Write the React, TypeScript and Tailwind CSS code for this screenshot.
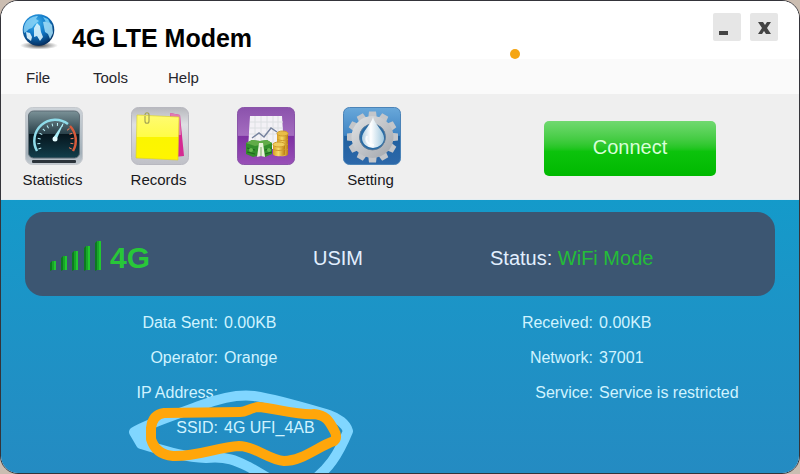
import React from "react";

function GlobeIcon() {
  return (
    <svg width="40" height="36" viewBox="0 0 40 36" aria-hidden="true">
      <defs>
        <radialGradient id="globe" cx="42%" cy="28%" r="75%">
          <stop offset="0" stopColor="#3fb2ee" />
          <stop offset="0.5" stopColor="#0f76c6" />
          <stop offset="1" stopColor="#052a58" />
        </radialGradient>
        <radialGradient id="globeShade">
          <stop offset="0" stopColor="#222" stopOpacity="0.85" />
          <stop offset="1" stopColor="#333" stopOpacity="0" />
        </radialGradient>
      </defs>
      <ellipse cx="20" cy="31.500" rx="19" ry="4" fill="url(#globeShade)" />
      <circle cx="19.500" cy="16" r="15.800" fill="url(#globe)" />
      <path d="M7 8c3-4 8-6 12-6l-2 3 3 2-4 3-3 4-3 1-3 3-2 1c-1-4 0-8 2-11z" fill="#8fd6f7" opacity="0.8" />
      <path d="M15 14l3-5 3 3 1 6 2 5-3 4-3-5-3 1z" fill="#d9f3fd" opacity="0.9" />
      <path d="M24 8l5-1 4 4 1 8-3 6-2-5-3-2z" fill="#a6e0f9" opacity="0.85" />
      <path d="M7 18l4 1 2 4-1 4-4-3z" fill="#e6f8ff" opacity="0.9" />
      <path d="M24 3l5 2 2 4-4-1z" fill="#6cc5f1" />
    </svg>
  );
}

function StatisticsIcon() {
  return (
    <svg width="58" height="58" viewBox="0 0 58 58" aria-hidden="true">
      <defs>
        <linearGradient id="dial" x2="0" y2="1">
          <stop offset="0" stopColor="#7b9298" />
          <stop offset="0.49" stopColor="#294049" />
          <stop offset="0.5" stopColor="#06161e" />
          <stop offset="1" stopColor="#123e4b" />
        </linearGradient>
        <linearGradient id="dialRim" x2="0" y2="1">
          <stop offset="0" stopColor="#cdd3d8" />
          <stop offset="0.8" stopColor="#a3b0b9" />
          <stop offset="1" stopColor="#c5cbd1" />
        </linearGradient>
      </defs>
      <rect x="0.500" y="0.500" width="57" height="57" rx="7" fill="url(#dialRim)" stroke="#c4c8cd" />
      <rect x="7" y="53" width="44" height="3" rx="1" fill="#2b333a" />
      <rect x="3.500" y="4" width="51" height="47" rx="5" fill="url(#dial)" stroke="#5d6b74" />
      <path d="M12 44A21 21 0 0 1 43 17" fill="none" stroke="#8fdcea" strokeWidth="2.500" />
      <path d="M15 42A18 18 0 0 1 41 20" fill="none" stroke="#b8f2fa" strokeWidth="3" strokeDasharray="1 4" />
      <path d="M45 19A21 21 0 0 1 48 44" fill="none" stroke="#d85b3c" strokeWidth="2.500" />
      <path d="M43 22A18 18 0 0 1 45 42" fill="none" stroke="#ee7655" strokeWidth="3" strokeDasharray="1 4" />
      <path d="M39 15L28 31q0 3 3 3z" fill="#a8edf8" />
      <circle cx="30" cy="32" r="2.500" fill="#e3fbff" />
    </svg>
  );
}

function RecordsIcon() {
  return (
    <svg width="58" height="58" viewBox="0 0 58 58" aria-hidden="true">
      <defs>
        <linearGradient id="tray" x2="0" y2="1">
          <stop offset="0" stopColor="#b7b8bd" />
          <stop offset="0.3" stopColor="#dedfe3" />
          <stop offset="1" stopColor="#bfc0c7" />
        </linearGradient>
        <linearGradient id="note" x2="0" y2="1">
          <stop offset="0" stopColor="#fffb72" />
          <stop offset="0.48" stopColor="#fffc48" />
          <stop offset="0.5" stopColor="#fbf500" />
          <stop offset="1" stopColor="#fff500" />
        </linearGradient>
      </defs>
      <rect x="0.500" y="0.500" width="57" height="57" rx="7" fill="url(#tray)" stroke="#b8b8c0" />
      <path d="M39 6l10 2 4 41-10 1z" fill="#d42a92" />
      <path d="M39 6l10 2 1 20h-8z" fill="#e07ab2" />
      <path d="M6 8l42 2-1 43-42-2z" fill="url(#note)" stroke="#dcd21d" strokeWidth="0.600" />
      <path d="M14 8c0-3 4-3 4 0v6c0 3-4 3-4 0V9" fill="none" stroke="#a4a454" strokeWidth="1.200" />
    </svg>
  );
}

function UssdIcon() {
  return (
    <svg width="58" height="58" viewBox="0 0 58 58" aria-hidden="true">
      <defs>
        <linearGradient id="violet" x2="0" y2="1">
          <stop offset="0" stopColor="#8b52ac" />
          <stop offset="0.49" stopColor="#a46cc0" />
          <stop offset="0.5" stopColor="#7d30a2" />
          <stop offset="1" stopColor="#9950b7" />
        </linearGradient>
        <linearGradient id="coin">
          <stop offset="0" stopColor="#d89c20" />
          <stop offset="0.45" stopColor="#f7dc68" />
          <stop offset="1" stopColor="#bd7c11" />
        </linearGradient>
      </defs>
      <rect x="0.500" y="0.500" width="57" height="57" rx="6" fill="url(#violet)" stroke="#8a55a9" />
      <path d="M13 9h32l2 33H11z" fill="#f3f1f6" />
      <path d="M13 15h33M13 21h33M12 27h34M18 9v30M24 9v30M30 9v30M36 9v30M41 9v30" stroke="#dcdfe2" />
      <path d="M15 31l7-5 5 4 7-9 6 4" fill="none" stroke="#76829e" strokeWidth="1.500" />
      <path d="M40 27v20c0 3 11 3 11 0V27z" fill="url(#coin)" />
      <path d="M40 32c2 2 9 2 11 0M40 37c2 2 9 2 11 0M40 42c2 2 9 2 11 0" fill="none" stroke="#cf9a2c" />
      <ellipse cx="45.500" cy="26.500" rx="5.500" ry="2.500" fill="#e9bd47" stroke="#cf9a2c" />
      <path d="M36 38v9c0 3 12 3 12 0v-9z" fill="url(#coin)" />
      <path d="M36 42c2 2 10 2 12 0" fill="none" stroke="#cf9a2c" />
      <ellipse cx="42" cy="37.500" rx="6" ry="2.500" fill="#f0ce5e" stroke="#cf9a2c" />
      <path d="M9 36l6-3 8 1 7-1 5 3v11l-7 3-5-2-7 2-7-3z" fill="#338e2c" />
      <path d="M9 36l6-3 8 1 7-1 5 3-8 3-4-1-5 1z" fill="#61ac48" />
      <path d="M10 41l8 2M10 45l8 2M28 43l7-2M28 47l7-2" fill="none" stroke="#1d641e" />
      <path d="M22 36h4l2 14-4-1-4 1z" fill="#eaf2dc" />
      <path d="M24 40v9" stroke="#7cae67" />
      <circle cx="14" cy="43" r="2" fill="#69bc52" />
      <circle cx="32" cy="43" r="2" fill="#69bc52" />
    </svg>
  );
}

function SettingIcon() {
  return (
    <svg width="58" height="58" viewBox="0 0 58 58" aria-hidden="true">
      <defs>
        <linearGradient id="azure" x2="0" y2="1">
          <stop offset="0" stopColor="#69a8da" />
          <stop offset="0.49" stopColor="#3f84c3" />
          <stop offset="0.5" stopColor="#20609f" />
          <stop offset="1" stopColor="#2c68aa" />
        </linearGradient>
        <linearGradient id="cog" x2="1" y2="1">
          <stop offset="0" stopColor="#dcdee0" />
          <stop offset="1" stopColor="#a7abb1" />
        </linearGradient>
        <linearGradient id="drop">
          <stop offset="0" stopColor="#b1cee0" />
          <stop offset="0.4" stopColor="#ffffff" />
          <stop offset="1" stopColor="#a1c8de" />
        </linearGradient>
      </defs>
      <rect x="0.500" y="0.500" width="57" height="57" rx="6" fill="url(#azure)" stroke="#4b83b7" />
      <g fill="#c3c6ca">
        {[0, 30, 60, 90, 120, 150, 180, 210, 240, 270, 300, 330].map((a) => (
          <path key={a} d="M25 13l1-8.500h7l1 8.500z" transform={`rotate(${a} 29.500 30)`} />
        ))}
      </g>
      <circle cx="29.500" cy="30" r="17" fill="none" stroke="url(#cog)" strokeWidth="8" />
      <circle cx="29.500" cy="30" r="13" fill="#286ba5" stroke="#697f94" strokeWidth="0.800" />
      <path d="M30 10c2 8 11 14 11 21a11 10 0 0 1-22 0c0-7 9-13 11-21z" fill="url(#drop)" />
      <path d="M24 29c-2 5 1 9 7 9" fill="none" stroke="#fff" strokeWidth="2" opacity="0.800" />
    </svg>
  );
}

function SignalIcon() {
  const bars = [
    { x: 0, y: 20, h: 9 },
    { x: 11, y: 15, h: 14 },
    { x: 22, y: 10, h: 19 },
    { x: 34, y: 5, h: 24 },
    { x: 45, y: 0, h: 29 },
  ];
  return (
    <svg width="53" height="30" viewBox="0 0 53 30" role="img" aria-label="Signal strength">
      {bars.map((b) => (
        <g key={b.x}>
          <path d={`M${b.x} ${b.y + 2}l2-2v${b.h}l-2 1z`} fill="#0c7a20" />
          <path d={`M${b.x + 2} ${b.y}h4v${b.h}h-4z`} fill="#22c830" />
          <path d={`M${b.x + 2} ${b.y}h2v${b.h}h-2z`} fill="#18a528" />
        </g>
      ))}
    </svg>
  );
}

const tools = [
  { label: "Statistics", Icon: StatisticsIcon },
  { label: "Records", Icon: RecordsIcon },
  { label: "USSD", Icon: UssdIcon },
  { label: "Setting", Icon: SettingIcon },
];

function Detail({ label, value, children }: { label: string; value?: string; children?: React.ReactNode }) {
  return (
    <div className="relative grid h-[35px] grid-cols-[217px_1fr] items-center gap-x-[6px]">
      <dt className="text-right">{label}:</dt>
      <dd>{value}</dd>
      {children}
    </div>
  );
}

function HandDrawnCircle() {
  return (
    <svg
      className="pointer-events-none absolute -top-[34px] left-[119px]"
      width="240"
      height="98"
      viewBox="120 376 240 98"
      fill="none"
      strokeLinecap="round"
      strokeLinejoin="round"
      aria-hidden="true"
    >
      <path
        d="M316 478C327 469 337 458 348 431C346 424 338 418 329 415C305 408 279 400 254 396C238 394 218 399 202 405C178 414 151 422 134 432L141 444C162 450 183 457 206 458C228 456 237 461 249 467L268 478"
        stroke="#80d6ff"
        strokeWidth="10"
      />
      <path d="M134 432L146 428L148 444L141 444Z" stroke="#80d6ff" strokeWidth="4" fill="#80d6ff" />
      <path
        d="M164 413C156 414 152 419 151 428L151 439C154 449 161 455 173 456C196 457 218 447 239 446C255 446 269 460 284 461C302 461 317 447 334 441Q338 437 334 430C329 421 326 415 314 414C302 416 273 408 258 407C249 408 247 412 240 412Z"
        stroke="#ffa60a"
        strokeWidth="10"
      />
    </svg>
  );
}

export default function App() {
  return (
    <div className="bg-[#cbbdb1] font-['Liberation_Sans',Arial,sans-serif]">
      <div className="relative flex min-h-screen flex-col overflow-hidden rounded-[18px] border border-[#34343a] bg-[#f0f0f0]">
        <header className="flex h-[58px] items-start justify-between bg-white pr-[21px] pl-[18px]">
          <div className="flex items-start gap-[13px] pt-[13px]">
            <GlobeIcon />
            <h1 className="pt-[7px] text-[25px] leading-[34px] font-bold text-black">4G LTE Modem</h1>
          </div>
          <div className="flex gap-[9px] pt-3">
            <button aria-label="Minimize" className="flex size-7 items-center justify-center rounded-xs bg-[#e6e6e6]">
              <svg width="28" height="28" aria-hidden="true">
                <path d="M6 18h9v4H6z" fill="#444" />
              </svg>
            </button>
            <button aria-label="Close" className="flex size-7 items-center justify-center rounded-xs bg-[#e6e6e6]">
              <svg width="28" height="28" aria-hidden="true">
                <path d="M8 9h5l2 3 2-3h4l-4 6 4 6h-5l-2-3-2 3H8l4-6z" fill="#444" />
              </svg>
            </button>
          </div>
        </header>

        <nav className="flex h-[35px] items-center gap-[37px] bg-[#fafafa] px-[25px] pt-1 text-[15px] text-[#26262c]">
          <button className="w-[30px] text-left">File</button>
          <button className="w-[38px] text-left">Tools</button>
          <button>Help</button>
        </nav>

        <div className="flex h-[106px] items-start justify-between border-b border-[#e4eef2] bg-[#efefef] pr-[83px]">
          <div className="flex pt-[13px]">
            {tools.map(({ label, Icon }) => (
              <button key={label} className="flex w-[106px] flex-col items-center gap-[5px] text-[15px] leading-5 text-[#18181c]">
                <Icon />
                <span className="pr-[3px]">{label}</span>
              </button>
            ))}
          </div>
          <button className="mt-[27px] h-[55px] w-[172px] rounded-[5px] bg-linear-to-b from-[#70d970] via-[#0cc30c] via-55% to-[#00b900] pb-[3px] text-[20px] text-[#d8ffd8]">
            Connect
          </button>
        </div>

        <main className="flex-1 bg-linear-to-b from-[#149aca] to-[#248bc2] px-6 pt-3 text-[#d0f3ff]">
          <section className="grid h-[84px] grid-cols-[288px_177px_1fr] items-center rounded-[18px] bg-[#3c5672] text-[20px] text-[#e2efff]">
            <div className="flex items-center gap-[7px] pt-[3px] pl-[25px]">
              <SignalIcon />
              <span className="pt-[5px] text-[30px] leading-[34px] font-bold text-[#28c738]">4G</span>
            </div>
            <p className="pt-2">USIM</p>
            <p className="pt-2">
              Status: <span className="text-[#24bd38]">WiFi Mode</span>
            </p>
          </section>
          <div className="-mx-6 grid grid-cols-[47%_1fr] pt-[9px] text-[16px]">
            <dl>
              <Detail label="Data Sent" value="0.00KB" />
              <Detail label="Operator" value="Orange" />
              <Detail label="IP Address" />
              <Detail label="SSID" value="4G UFI_4AB">
                <HandDrawnCircle />
              </Detail>
            </dl>
            <dl>
              <Detail label="Received" value="0.00KB" />
              <Detail label="Network" value="37001" />
              <Detail label="Service" value="Service is restricted" />
            </dl>
          </div>
        </main>
        <span className="absolute top-12 left-[509px] size-[10px] rounded-full bg-[#f5a511]" />
      </div>
    </div>
  );
}
